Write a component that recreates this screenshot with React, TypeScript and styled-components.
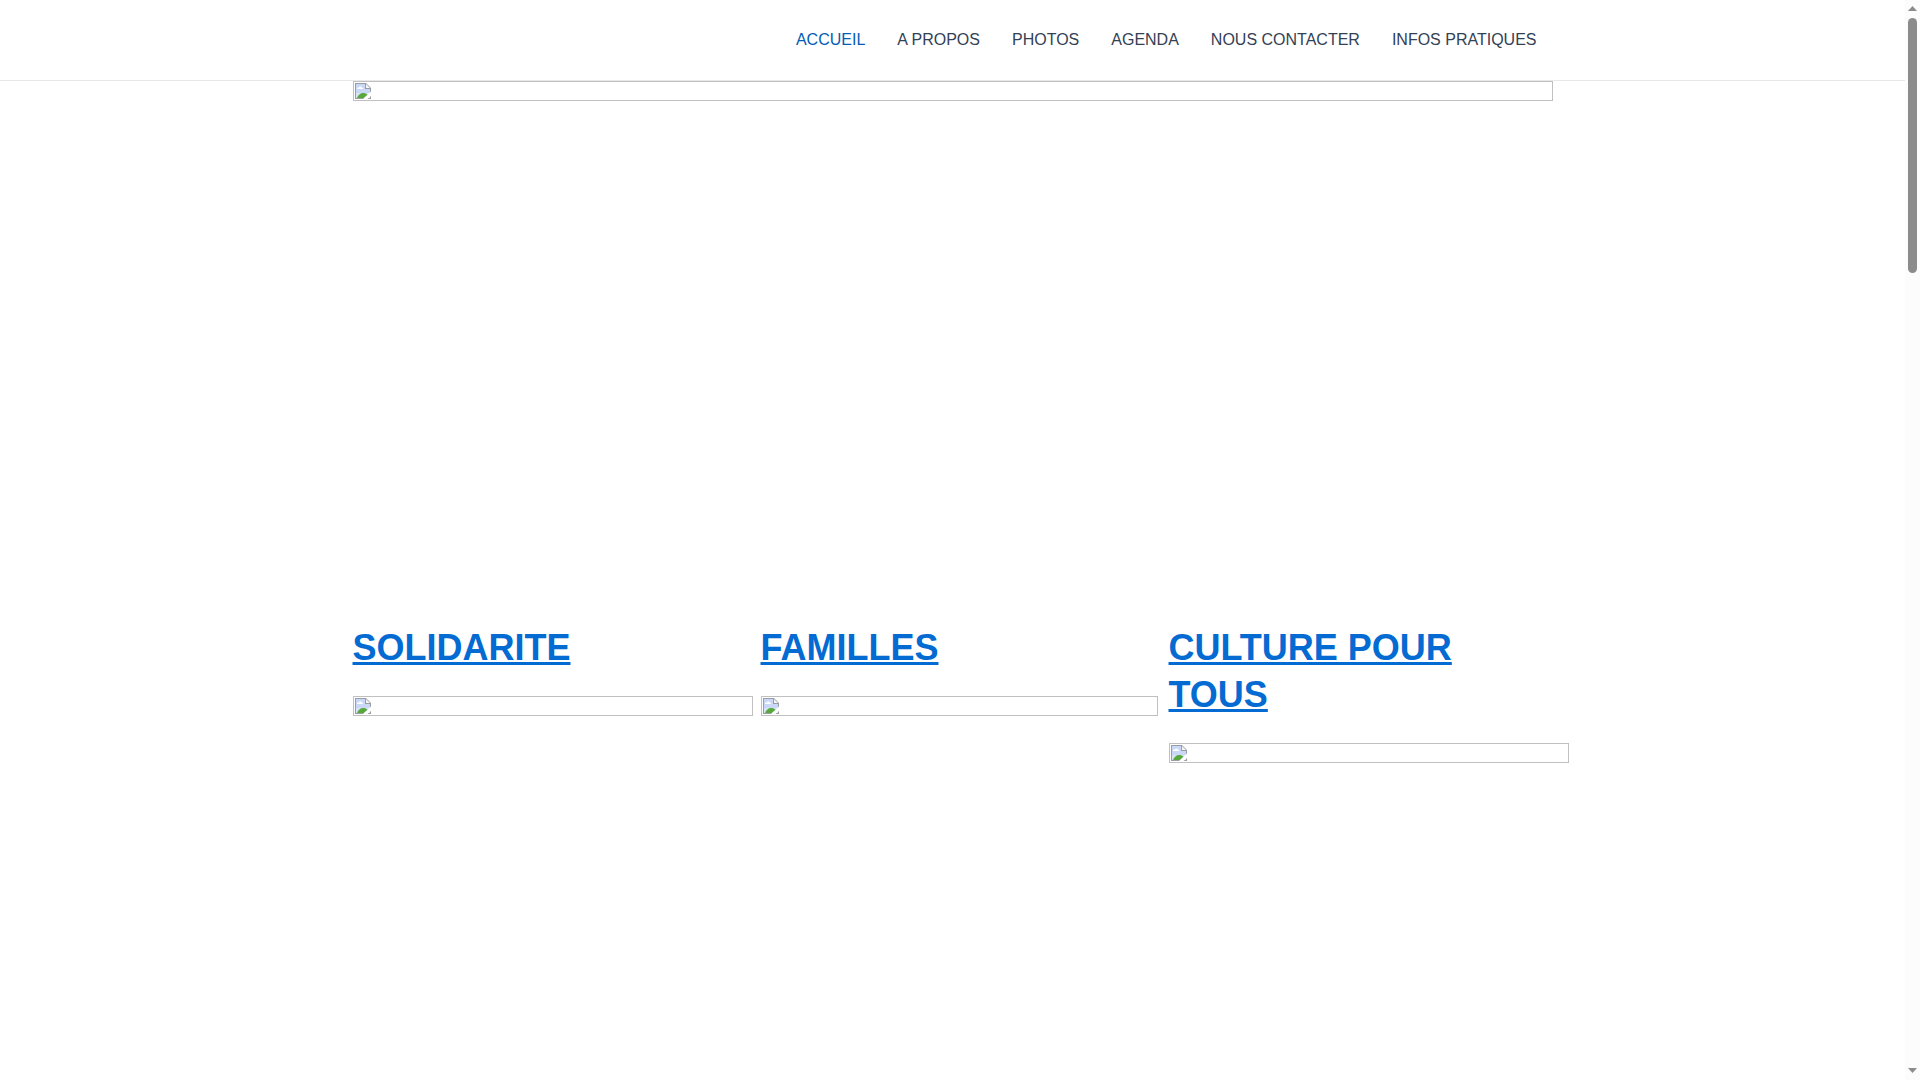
import React from "react";
import styled, { createGlobalStyle } from "styled-components";

const GlobalStyle = createGlobalStyle`
  *, *::before, *::after { box-sizing: border-box; }
  body {
    margin: 0;
    background: #fff;
    color: #334155;
    font: 16px/26px "Liberation Sans", Arial, sans-serif;
  }
`;

const Shell = styled.div`
  display: flex;
  min-height: 100vh;
`;

const Page = styled.div`
  flex: 1;
  min-width: 0;
`;

const Header = styled.header`
  border-bottom: 1px solid #e8e8e8;
`;

const Container = styled.div`
  width: 100%;
  max-width: 1200px;
  margin: 0 auto;
`;

const Nav = styled.nav`
  display: flex;
  justify-content: flex-end;
  flex-wrap: wrap;
`;

const NavLink = styled.a<{ $active?: boolean }>`
  padding: 0 16px;
  line-height: 80px;
  text-decoration: none;
  color: ${(p) => (p.$active ? "#045cb4" : "#334155")};
  &:hover { color: #045cb4; }
`;

const Hero = styled.section`
  min-height: 543px;
`;

const Placeholder = styled.div<{ $width?: number }>`
  display: flex;
  width: ${(p) => (p.$width ? `${p.$width}px` : "100%")};
  height: 20px;
  padding: 1px;
  border: 1px solid #c0c0c0;
`;

const Columns = styled.section`
  display: grid;
  grid-template-columns: repeat(3, minmax(0, 1fr));
  gap: 24px;
`;

const ColumnTitle = styled.h2`
  margin: 0 0 25px;
  font-size: 36px;
  line-height: 47px;
  font-weight: 700;
`;

const TitleLink = styled.a`
  color: #046bd2;
  text-decoration: underline;
`;

const Scrollbar = styled.div`
  position: sticky;
  top: 0;
  flex: none;
  display: flex;
  flex-direction: column;
  align-items: center;
  justify-content: space-between;
  width: 15px;
  height: 100vh;
  padding: 6px 0 7px;
  background: #fcfcfc;
`;

const ScrollTop = styled.div`
  display: grid;
  justify-items: center;
  gap: 7px;
`;

const Arrow = styled.svg`
  display: block;
  width: 9px;
  height: 5px;
  fill: #8b8b8b;
`;

const Thumb = styled.div`
  width: 9px;
  height: 255px;
  border-radius: 5px;
  background: #8b8b8b;
`;

const menu = ["ACCUEIL", "A PROPOS", "PHOTOS", "AGENDA", "NOUS CONTACTER", "INFOS PRATIQUES"];

const sections = [
  { title: "SOLIDARITE", width: 400 },
  { title: "FAMILLES", width: 397 },
  { title: "CULTURE POUR TOUS", width: 400 },
];

function MissingImage({ width }: { width?: number }) {
  return (
    <Placeholder $width={width}>
      <svg width="16" height="16" viewBox="0 0 16 16" aria-hidden="true">
        <path d="M0 0H11L16 5V16H0Z" fill="#9a9da3" />
        <path d="M1 1H10V6H15V15H1Z" fill="#c9d8f6" />
        <path d="M1 10H15V15H1Z" fill="#d9e3f8" />
        <path d="M2 15C3 12 5.5 10 8 10C10 10 11.5 10.6 12.5 12L9 15Z" fill="#58a83c" />
        <path d="M2 6C2 4.8 3 4.4 3.8 4.7C4.2 3.2 6.6 3.2 7 4.8C8 4.8 8.4 5.4 8.3 6Z" fill="#fff" />
        <path d="M11 1V5H15Z" fill="#f6f6f6" />
        <path d="M16 8.5V13L12.5 16H8Z" fill="#fff" />
      </svg>
    </Placeholder>
  );
}

export default function App() {
  return (
    <>
      <GlobalStyle />
      <Shell>
        <Page>
          <Header>
            <Container>
              <Nav aria-label="Menu principal">
                {menu.map((label, i) => (
                  <NavLink key={label} href="#" $active={i === 0}>{label}</NavLink>
                ))}
              </Nav>
            </Container>
          </Header>
          <Container as="main">
            <Hero>
              <MissingImage />
            </Hero>
            <Columns>
              {sections.map(({ title, width }) => (
                <article key={title}>
                  <ColumnTitle>
                    <TitleLink href="#">{title}</TitleLink>
                  </ColumnTitle>
                  <MissingImage width={width} />
                </article>
              ))}
            </Columns>
          </Container>
        </Page>
        <Scrollbar aria-hidden="true">
          <ScrollTop>
            <Arrow viewBox="0 0 9 5"><path d="M4.5 0L9 5H0Z" /></Arrow>
            <Thumb />
          </ScrollTop>
          <Arrow viewBox="0 0 9 5"><path d="M0 0H9L4.5 5Z" /></Arrow>
        </Scrollbar>
      </Shell>
    </>
  );
}
